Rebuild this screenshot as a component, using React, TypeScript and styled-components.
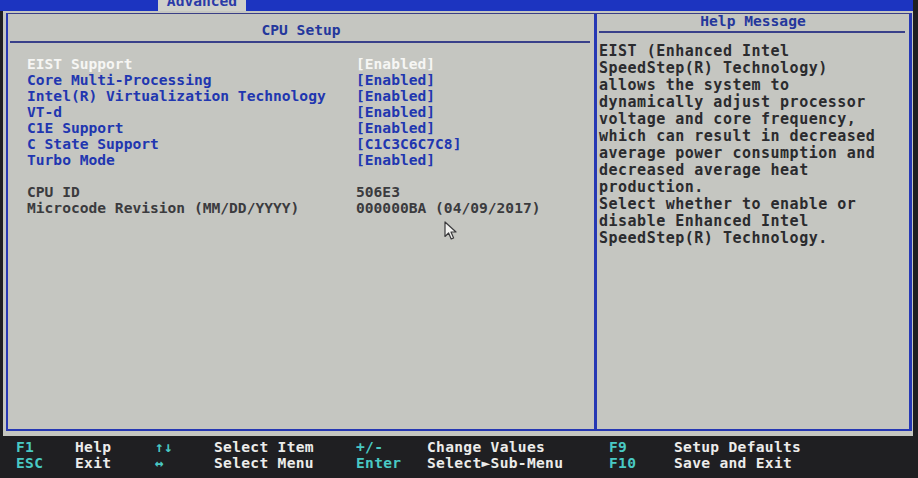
import React from "react";
import styled, { createGlobalStyle } from "styled-components";

const Global = createGlobalStyle`
  html, body { margin: 0; padding: 0; background: #1f1f22; }
  body { width: 918px; height: 478px; overflow: hidden; }
`;

const mono = `"DejaVu Sans Mono", "Liberation Mono", monospace`;

const Screen = styled.div`
  position: relative;
  width: 918px;
  height: 478px;
  display: flex;
  flex-direction: column;
  background: #1f1f22;
  font-family: ${mono};
  font-weight: bold;
  font-size: 14.6px;
  overflow: hidden;
`;

const TopBar = styled.div`
  flex: none;
  height: 11px;
  margin-right: 5px;
  padding-left: 158px;
  background: #1c34c0;
  display: flex;
`;

const Tab = styled.div`
  width: 88px;
  height: 11px;
  background: #cfd0cb;
  color: #2a3aa8;
  display: flex;
  justify-content: center;
  overflow: hidden;
`;

const TabLabel = styled.span`
  line-height: 14px;
  margin-top: -6px;
`;

const Main = styled.div`
  flex: none;
  height: 425px;
  margin: 0 5px 0 3px;
  padding: 2px 1px 5px 3px;
  box-sizing: border-box;
  background: #c5c6c1;
`;

const Frame = styled.div`
  height: 100%;
  box-sizing: border-box;
  border: 2px solid #2638b4;
  border-top: 1px solid #3a3f86;
  border-right-width: 3px;
  display: grid;
  grid-template-columns: 586px 3px 1fr;
`;

const Divider = styled.div`
  background: #2638b4;
`;

const Panel = styled.div`
  display: flex;
  flex-direction: column;
  min-width: 0;
`;

const PanelTitle = styled.div<{ $top: number; $lh: number }>`
  padding-top: ${(p) => p.$top}px;
  line-height: ${(p) => p.$lh}px;
  text-align: center;
  color: #24379c;
`;

const Separator = styled.div<{ $gap: number }>`
  height: 2px;
  margin: ${(p) => p.$gap}px 4px 0 2px;
  background: #39408a;
`;

const List = styled.div`
  padding: 13px 0 0 19px;
  display: flex;
  flex-direction: column;
`;

const Row = styled.div<{ $tone: "item" | "selected" | "info" }>`
  display: grid;
  grid-template-columns: 329px 1fr;
  height: 16px;
  line-height: 16px;
  white-space: pre;
  color: ${(p) =>
    p.$tone === "selected" ? "#f6f6f4" : p.$tone === "info" ? "#3b3b3e" : "#2136b0"};
`;

const Spacer = styled.div`
  height: 16px;
`;

const HelpBody = styled.div`
  padding: 10px 0 0 2px;
  color: #2b2b2e;
  font-size: 15px;
  letter-spacing: 0.5px;
`;

const HelpLine = styled.div`
  height: 17px;
  line-height: 17px;
  white-space: pre;
`;

const BottomBar = styled.div`
  flex: 1;
  padding: 3px 0 0 16px;
  display: grid;
  grid-template-columns: 59px 80px 59px 142px 71px 182px 65px 1fr;
  grid-auto-rows: 16px;
  line-height: 16px;
  letter-spacing: 0.3px;
  white-space: pre;
`;

const Key = styled.div`
  color: #49c9c4;
`;

const Action = styled.div`
  color: #ececea;
`;

const Cursor = styled.svg`
  position: absolute;
  left: 444px;
  top: 221px;
`;

const items: { label: string; value: string; selected?: boolean }[] = [
  { label: "EIST Support", value: "[Enabled]", selected: true },
  { label: "Core Multi-Processing", value: "[Enabled]" },
  { label: "Intel(R) Virtualization Technology", value: "[Enabled]" },
  { label: "VT-d", value: "[Enabled]" },
  { label: "C1E Support", value: "[Enabled]" },
  { label: "C State Support", value: "[C1C3C6C7C8]" },
  { label: "Turbo Mode", value: "[Enabled]" },
];

const info = [
  { label: "CPU ID", value: "506E3" },
  { label: "Microcode Revision (MM/DD/YYYY)", value: "000000BA (04/09/2017)" },
];

const help = [
  "EIST (Enhanced Intel",
  "SpeedStep(R) Technology)",
  "allows the system to",
  "dynamically adjust processor",
  "voltage and core frequency,",
  "which can result in decreased",
  "average power consumption and",
  "decreased average heat",
  "production.",
  "Select whether to enable or",
  "disable Enhanced Intel",
  "SpeedStep(R) Technology.",
];

const keys: [string, string, string, string, string, string, string, string][] = [
  ["F1", "Help", "↑↓", "Select Item", "+/-", "Change Values", "F9", "Setup Defaults"],
  ["ESC", "Exit", "↔", "Select Menu", "Enter", "Select►Sub-Menu", "F10", "Save and Exit"],
];

export default function App() {
  return (
    <>
      <Global />
      <Screen>
        <TopBar>
          <Tab>
            <TabLabel>Advanced</TabLabel>
          </Tab>
        </TopBar>
        <Main>
          <Frame>
            <Panel>
              <PanelTitle $top={8} $lh={16}>CPU Setup</PanelTitle>
              <Separator $gap={3} />
              <List>
                {items.map((it) => (
                  <Row key={it.label} $tone={it.selected ? "selected" : "item"}>
                    <span>{it.label}</span>
                    <span>{it.value}</span>
                  </Row>
                ))}
                <Spacer />
                {info.map((it) => (
                  <Row key={it.label} $tone="info">
                    <span>{it.label}</span>
                    <span>{it.value}</span>
                  </Row>
                ))}
              </List>
            </Panel>
            <Divider />
            <Panel>
              <PanelTitle $top={0} $lh={14}>Help Message</PanelTitle>
              <Separator $gap={3} />
              <HelpBody>
                {help.map((l, i) => (
                  <HelpLine key={i}>{l}</HelpLine>
                ))}
              </HelpBody>
            </Panel>
          </Frame>
        </Main>
        <BottomBar>
          {keys.map((row) =>
            row.map((t, i) =>
              i % 2 === 0 ? <Key key={row[0] + i}>{t}</Key> : <Action key={row[0] + i}>{t}</Action>
            )
          )}
        </BottomBar>
        <Cursor width="14" height="20" viewBox="0 0 14 20">
          <path
            d="M1 1 L1 15.5 L4.6 12 L7.2 18 L9.6 17 L7 11 L12 11 Z"
            fill="#f2f2f0"
            stroke="#3a3a3c"
            strokeWidth="1.2"
            strokeLinejoin="round"
          />
        </Cursor>
      </Screen>
    </>
  );
}
